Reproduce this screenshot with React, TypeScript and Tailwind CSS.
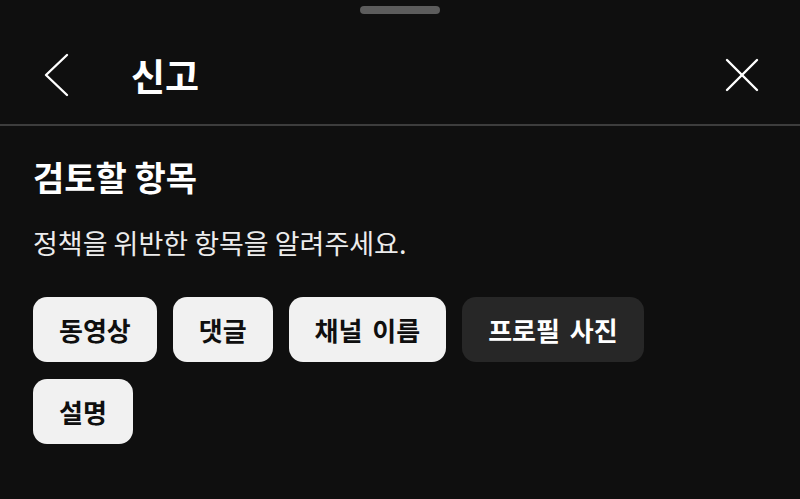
const font = { fontFamily: '"Noto Sans CJK KR", "Noto Sans", sans-serif' };

const chips = [
  { label: '동영상', selected: false },
  { label: '댓글', selected: false },
  { label: '채널 이름', selected: false },
  { label: '프로필 사진', selected: true },
  { label: '설명', selected: false },
];

function Chip({ label, selected }: { label: string; selected: boolean }) {
  return (
    <button
      className={
        selected
          ? 'h-[65px] px-[26px] rounded-[14px] bg-[#272727] text-white text-[26px] font-semibold [word-spacing:4px] flex items-center'
          : 'h-[65px] px-[26px] rounded-[14px] bg-[#f1f1f1] text-[#0f0f0f] text-[26px] font-semibold [word-spacing:4px] flex items-center'
      }
    >
      {label}
    </button>
  );
}

export default function App() {
  return (
    <div className="w-[800px] h-[499px] overflow-hidden bg-[#0f0f0f] text-white" style={font}>
      <div className="h-[14px] pt-[6px] flex justify-center">
        <div className="w-20 h-2 rounded-full bg-[#5c5c5c]" />
      </div>

      <div className="h-[110px] pt-[12px] flex items-center">
        <div className="w-[131px] pl-[43px] flex items-center">
          <svg width="28" height="44" viewBox="0 0 28 44" fill="none">
            <polyline points="24,2 3,22 24,42" stroke="white" strokeWidth="2.4" strokeLinecap="round" strokeLinejoin="round" />
          </svg>
        </div>
        <h1 className="text-[37px] font-bold leading-none flex-1">신고</h1>
        <div className="pr-[41px] flex items-center">
          <svg width="34" height="34" viewBox="0 0 34 34" fill="none">
            <line x1="2" y1="2" x2="32" y2="32" stroke="white" strokeWidth="2.4" strokeLinecap="round" />
            <line x1="32" y1="2" x2="2" y2="32" stroke="white" strokeWidth="2.4" strokeLinecap="round" />
          </svg>
        </div>
      </div>

      <div className="h-[2px] bg-[#3d3d3d]" />

      <div className="px-[33px]">
        <h2 className="mt-[31px] text-[34px] font-bold leading-[1.2]">검토할 항목</h2>
        <p className="mt-[29px] text-[27px] leading-[1.2] text-[#ececec]">정책을 위반한 항목을 알려주세요.</p>
        <div className="mt-[38px] flex flex-wrap gap-x-[16px] gap-y-[17px] w-[640px]">
          {chips.map((c) => (
            <Chip key={c.label} label={c.label} selected={c.selected} />
          ))}
        </div>
      </div>
    </div>
  );
}
